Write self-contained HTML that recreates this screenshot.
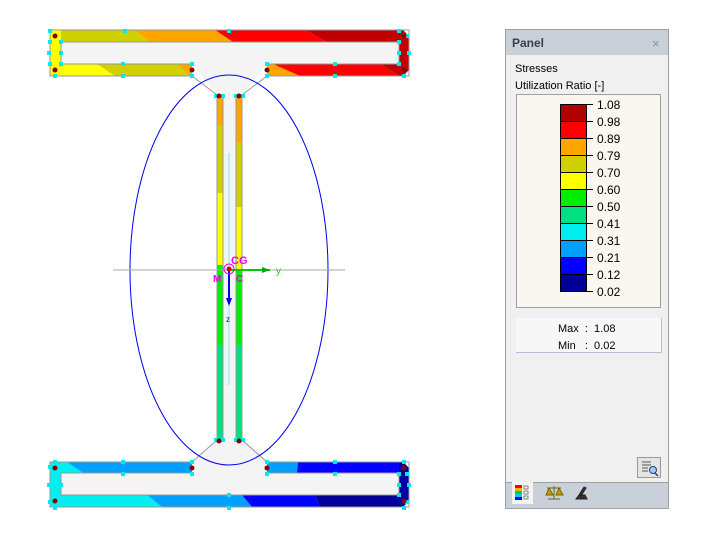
<!DOCTYPE html>
<html><head><style>
html,body{margin:0;padding:0;background:#fff;width:718px;height:537px;overflow:hidden;font-family:"Liberation Sans",sans-serif}
svg{position:absolute;left:0;top:0}
</style></head><body>
<svg width="718" height="537" xmlns="http://www.w3.org/2000/svg">
<path d="M61,42 H399 V64 H267 L242,95 V440 L267,462 H399 V495 H61 V462 H192 L217,440 V95 L192,64 H61 Z" fill="#f4f4f4"/>
<polygon points="50,30 135,30 150,42 50,42" fill="#d0d000"/>
<polygon points="135,30 215,30 233,42 150,42" fill="#ffa500"/>
<polygon points="215,30 305,30 327,42 233,42" fill="#ff0000"/>
<polygon points="305,30 402,30 409,36 409,42 327,42" fill="#c00000"/>
<rect x="50" y="30" width="11" height="46" fill="#ffff00"/>
<polygon points="399,30 403,30 409,36 409,70 403,76 399,76" fill="#c00000"/>
<polygon points="61,64 97,64 115,76 50,76 50,64" fill="#ffff00"/>
<polygon points="97,64 177,64 190,76 115,76" fill="#d0d000"/>
<polygon points="177,64 192,64 192,76 190,76" fill="#ffa500"/>
<polygon points="267,64 273,64 300,76 267,76" fill="#ffa500"/>
<polygon points="273,64 380,64 400,76 300,76" fill="#ff0000"/>
<polygon points="380,64 399,64 405,76 400,76" fill="#c00000"/>
<rect x="217" y="95" width="6" height="30" fill="#ffa500"/>
<rect x="217" y="125" width="6" height="68" fill="#d0d000"/>
<rect x="217" y="193" width="6" height="72" fill="#ffff00"/>
<rect x="217" y="265" width="6" height="80" fill="#00ee00"/>
<rect x="217" y="345" width="6" height="95" fill="#00e080"/>
<rect x="236" y="95" width="6" height="47" fill="#ffa500"/>
<rect x="236" y="142" width="6" height="65" fill="#d0d000"/>
<rect x="236" y="207" width="6" height="63" fill="#ffff00"/>
<rect x="236" y="270" width="6" height="75" fill="#00ee00"/>
<rect x="236" y="345" width="6" height="95" fill="#00e080"/>
<polygon points="50,462 67,462 83,473 61,473" fill="#00f0f0"/>
<polygon points="67,462 192,462 192,473 83,473" fill="#00a0ff"/>
<polygon points="267,462 298,462 297,473 267,473" fill="#00a0ff"/>
<polygon points="298,462 403,462 409,468 409,473 297,473" fill="#0000ff"/>
<rect x="50" y="462" width="11" height="45" fill="#00f0f0"/>
<polygon points="399,462 403,462 409,468 409,501 403,507 399,507" fill="#0000a0"/>
<polygon points="61,495 147,495 162,507 50,507 50,495" fill="#00f0f0"/>
<polygon points="147,495 242,495 252,507 162,507" fill="#00a0ff"/>
<polygon points="242,495 315,495 320,507 252,507" fill="#0000ff"/>
<polygon points="315,495 399,495 399,507 320,507" fill="#000099"/>
<g fill="none" stroke="#999" stroke-width="1">
<path d="M50,30 H409 V76 H267 L242,95 V440 L267,462 H409 V507 H50 V462 H192 L217,440 V95 L192,76 H50 Z"/>
<path d="M61,64 V42 H399 V64 H267 M192,64 H61"/>
<path d="M61,473 H192 M267,473 H399 V495 H61 V473"/>
<path d="M223,95 V440 M236,95 V440"/>
</g>
<ellipse cx="229" cy="270" rx="99" ry="195" fill="none" stroke="#0000ee" stroke-width="1"/>
<line x1="113" y1="270" x2="345" y2="270" stroke="#aaa"/>
<line x1="229" y1="153" x2="229" y2="385" stroke="#7ee"/>
<line x1="229" y1="270" x2="270" y2="270" stroke="#00cc00" stroke-width="2"/>
<polygon points="262,267 270,270 262,273" fill="#00aa00"/>
<text x="276" y="274" font-size="10" fill="#22cc22">y</text>
<line x1="229" y1="270" x2="229" y2="302" stroke="#0000ee" stroke-width="2"/>
<polygon points="226,298 229,306 232,298" fill="#0000ee"/>
<text x="226" y="322" font-size="8" fill="#0000ee">z</text>
<circle cx="229" cy="269" r="5" fill="none" stroke="#e0e" stroke-width="1"/>
<circle cx="229" cy="269" r="2.5" fill="#d00"/>
<text x="231" y="264" font-size="11" font-weight="bold" fill="#e0e">CG</text>
<text x="213" y="282" font-size="10" font-weight="bold" fill="#e0e">M</text>
<text x="236" y="282" font-size="10" font-weight="bold" fill="#e0e">C</text>
<g fill="#00e8f0">
<rect x="48" y="29" width="4" height="4"/><rect x="123" y="29" width="4" height="4"/><rect x="227" y="29" width="4" height="4"/><rect x="397" y="29" width="4" height="4"/><rect x="405" y="34" width="4" height="4"/>
<rect x="48" y="40" width="4" height="4"/><rect x="59" y="40" width="4" height="4"/><rect x="397" y="40" width="4" height="4"/>
<rect x="47" y="51" width="4" height="4"/><rect x="59" y="51" width="4" height="4"/><rect x="397" y="51" width="4" height="4"/><rect x="407" y="51" width="4" height="4"/>
<rect x="48" y="62" width="4" height="4"/><rect x="59" y="62" width="4" height="4"/><rect x="121" y="62" width="4" height="4"/><rect x="190" y="62" width="4" height="4"/><rect x="265" y="62" width="4" height="4"/><rect x="333" y="62" width="4" height="4"/><rect x="397" y="62" width="4" height="4"/>
<rect x="53" y="74" width="4" height="4"/><rect x="121" y="74" width="4" height="4"/><rect x="190" y="74" width="4" height="4"/><rect x="265" y="74" width="4" height="4"/><rect x="333" y="74" width="4" height="4"/><rect x="402" y="74" width="4" height="4"/>
<rect x="214" y="94" width="4" height="4"/><rect x="221" y="94" width="4" height="4"/><rect x="234" y="94" width="4" height="4"/><rect x="241" y="94" width="4" height="4"/>
<rect x="214" y="438" width="4" height="4"/><rect x="221" y="438" width="4" height="4"/><rect x="234" y="438" width="4" height="4"/><rect x="241" y="438" width="4" height="4"/>
<rect x="53" y="460" width="4" height="4"/><rect x="121" y="460" width="4" height="4"/><rect x="190" y="460" width="4" height="4"/><rect x="265" y="460" width="4" height="4"/><rect x="333" y="460" width="4" height="4"/><rect x="402" y="460" width="4" height="4"/>
<rect x="48" y="465" width="4" height="4"/><rect x="121" y="472" width="4" height="4"/><rect x="190" y="472" width="4" height="4"/><rect x="265" y="472" width="4" height="4"/><rect x="333" y="472" width="4" height="4"/><rect x="397" y="472" width="4" height="4"/><rect x="405" y="472" width="4" height="4"/>
<rect x="47" y="483" width="4" height="4"/><rect x="59" y="483" width="4" height="4"/><rect x="397" y="483" width="4" height="4"/><rect x="407" y="483" width="4" height="4"/>
<rect x="48" y="500" width="4" height="4"/><rect x="227" y="493" width="4" height="4"/><rect x="397" y="493" width="4" height="4"/><rect x="405" y="500" width="4" height="4"/>
<rect x="53" y="506" width="4" height="4"/><rect x="227" y="506" width="4" height="4"/><rect x="402" y="506" width="4" height="4"/>
</g>
<g fill="#8a0000">
<circle cx="55" cy="36" r="2.5"/><circle cx="55" cy="70" r="2.5"/><circle cx="404" cy="36" r="2.5"/><circle cx="404" cy="70" r="2.5"/>
<circle cx="192" cy="70" r="2.5"/><circle cx="267" cy="70" r="2.5"/>
<circle cx="219" cy="96" r="2.5"/><circle cx="239" cy="96" r="2.5"/>
<circle cx="219" cy="441" r="2.5"/><circle cx="239" cy="441" r="2.5"/>
<circle cx="192" cy="468" r="2.5"/><circle cx="267" cy="468" r="2.5"/>
<circle cx="55" cy="468" r="2.5"/><circle cx="55" cy="501" r="2.5"/><circle cx="404" cy="468" r="2.5"/><circle cx="404" cy="501" r="2.5"/>
</g>

<rect x="505.5" y="29.5" width="163" height="479" fill="#f0f0f0" stroke="#a0a0a0"/>
<rect x="506" y="30" width="162" height="25" fill="#c9d0da"/>
<text x="512" y="47" font-size="12" font-weight="bold" fill="#3a3f4a">Panel</text>
<text x="652" y="48" font-size="13" fill="#8a8f99">×</text>
<text x="515" y="72" font-size="11" fill="#000">Stresses</text>
<text x="515" y="89" font-size="11" fill="#000">Utilization Ratio [-]</text>
<rect x="516.5" y="94.5" width="144" height="213" fill="#faf7f0" stroke="#a0a0a0"/>
<g stroke="#000" stroke-width="1">
<rect x="560.5" y="104.5" width="26" height="17" fill="#b00000"/>
<rect x="560.5" y="121.5" width="26" height="17" fill="#ff0000"/>
<rect x="560.5" y="138.5" width="26" height="17" fill="#ffa500"/>
<rect x="560.5" y="155.5" width="26" height="17" fill="#d0d000"/>
<rect x="560.5" y="172.5" width="26" height="17" fill="#ffff00"/>
<rect x="560.5" y="189.5" width="26" height="17" fill="#00ee00"/>
<rect x="560.5" y="206.5" width="26" height="17" fill="#00e080"/>
<rect x="560.5" y="223.5" width="26" height="17" fill="#00f0f0"/>
<rect x="560.5" y="240.5" width="26" height="17" fill="#00a0ff"/>
<rect x="560.5" y="257.5" width="26" height="17" fill="#0000ff"/>
<rect x="560.5" y="274.5" width="26" height="17" fill="#000099"/>
<path d="M586,104.5h7M586,121.5h7M586,138.5h7M586,155.5h7M586,172.5h7M586,189.5h7M586,206.5h7M586,223.5h7M586,240.5h7M586,257.5h7M586,274.5h7M586,291.5h7"/>
</g>
<g font-size="12" fill="#000">
<text x="597" y="109">1.08</text><text x="597" y="126">0.98</text><text x="597" y="143">0.89</text><text x="597" y="160">0.79</text>
<text x="597" y="177">0.70</text><text x="597" y="194">0.60</text><text x="597" y="211">0.50</text><text x="597" y="228">0.41</text>
<text x="597" y="245">0.31</text><text x="597" y="262">0.21</text><text x="597" y="279">0.12</text><text x="597" y="296">0.02</text>
</g>
<rect x="516" y="318" width="145" height="34" fill="#f7f7f7"/>
<path d="M516,352.5H661.5V318" fill="none" stroke="#b8b8d8"/>
<text x="558" y="332" font-size="11" fill="#000" xml:space="preserve">Max  :  1.08</text>
<text x="558" y="349" font-size="11" fill="#000" xml:space="preserve">Min   :  0.02</text>
<rect x="637.5" y="457.5" width="23" height="20" fill="#e4e4e4" stroke="#999"/>
<path d="M642,462h9M642,465h9M642,468h6M642,471h6" stroke="#555"/>
<circle cx="653" cy="470" r="3.5" fill="#9cf" stroke="#246"/>
<line x1="655" y1="473" x2="658" y2="476" stroke="#246" stroke-width="1.5"/>
<rect x="506" y="482" width="162" height="26" fill="#c9d0da"/>
<line x1="506" y1="482.5" x2="668" y2="482.5" stroke="#a0a0a0"/>
<rect x="512" y="482" width="21" height="22" fill="#f4f4f4"/>
<rect x="515" y="485" width="7" height="3" fill="#f00"/><rect x="515" y="488" width="7" height="3" fill="#fa0"/><rect x="515" y="491" width="7" height="3" fill="#0d0"/><rect x="515" y="494" width="7" height="3" fill="#0cf"/><rect x="515" y="497" width="7" height="3" fill="#00f"/>
<path d="M524,486h4v3h-4zM524,491h4v3h-4zM524,496h4v3h-4z" fill="none" stroke="#666" stroke-width="0.8"/>
<path d="M548,499h12M554,486v13M547,488h14M549,488l-3,7h7zM559,488l-3,7h7z" fill="#cc9900" stroke="#776600" stroke-width="1"/>
<path d="M576,499h11l-2,-4h-6zM579,495l5,-8l2,1l-5,8z" fill="#333" stroke="#222"/>
</svg>
</body></html>
